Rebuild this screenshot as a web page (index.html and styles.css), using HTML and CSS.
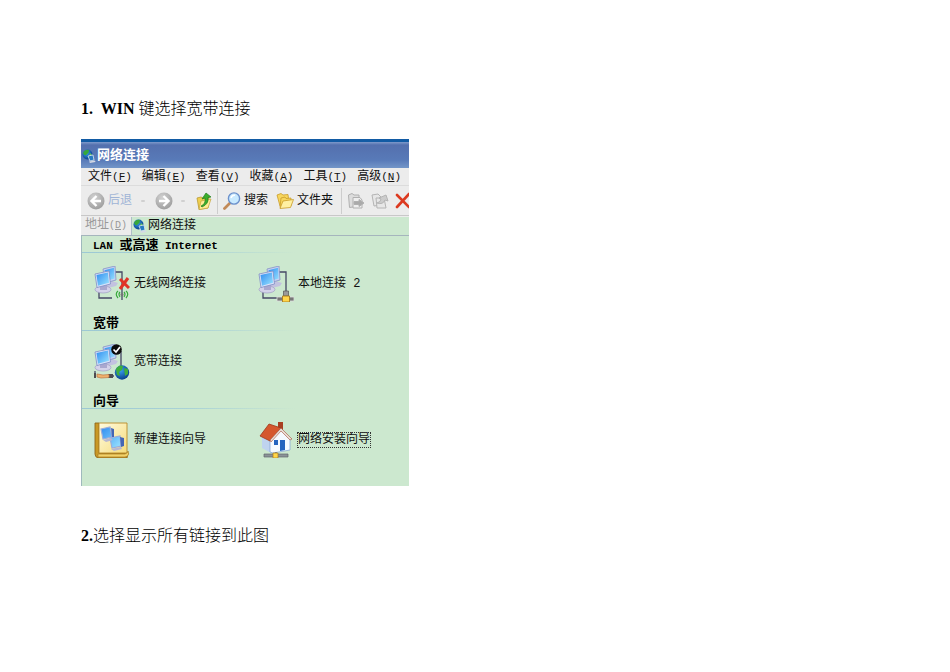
FILE: index.html
```html
<!DOCTYPE html>
<html lang="zh-CN">
<head>
    <meta charset="UTF-8">
    <meta name="viewport" content="width=device-width, initial-scale=1.0">
    <title>WIN 键选择宽带连接</title>
    <link rel="stylesheet" href="styles.css">
</head>
<body>
    <!-- shared drawings -->
    <svg class="defs" width="0" height="0" aria-hidden="true">
        <defs>
            <linearGradient id="screen" x1="0" y1="0" x2="1" y2="1">
                <stop offset="0" stop-color="#2f8df0"/>
                <stop offset="1" stop-color="#9be4ff"/>
            </linearGradient>
            <linearGradient id="paper" x1="0" y1="0" x2="1" y2="1">
                <stop offset="0" stop-color="#fffbe0"/>
                <stop offset="1" stop-color="#f5dc7c"/>
            </linearGradient>
            <radialGradient id="ball" cx="0.4" cy="0.35" r="0.7">
                <stop offset="0" stop-color="#3aa0ee"/>
                <stop offset="1" stop-color="#063a86"/>
            </radialGradient>
            <radialGradient id="disc" cx="0.4" cy="0.3" r="0.8">
                <stop offset="0" stop-color="#d2d2d2"/>
                <stop offset="1" stop-color="#989898"/>
            </radialGradient>
            <symbol id="pcs" viewBox="0 0 36 36">
                <path d="M11 17 L18 15 L24 17 L22 20 L14 22Z" fill="#c3c2e0"/>
                <path d="M9 3 L21 0 L22 14 L11 17Z" fill="#c9d3f2" stroke="#8592c6" stroke-width="0.8"/>
                <path d="M10.500 4.200 L20 1.800 L20.700 12.500 L12 15Z" fill="url(#screen)"/>
                <ellipse cx="9" cy="23.500" rx="8" ry="3.500" fill="#d4d2ea" stroke="#a09ec4" stroke-width="0.7"/>
                <path d="M6 18 L13 17 L13 24 L6 24Z" fill="#aaa8cf"/>
                <path d="M1 8 L15 5 L16.500 18 L3 21.500Z" fill="#dbe3fa" stroke="#7f8dc4" stroke-width="0.8"/>
                <path d="M2.500 9 L13.900 6.600 L15 16.800 L4 19.700Z" fill="url(#screen)"/>
            </symbol>
            <symbol id="net" viewBox="0 0 14 14">
                <circle cx="5.500" cy="5.500" r="5" fill="url(#ball)"/>
                <path d="M1 4 Q3 0 7 1 Q7 4 5 5 Q3 8 1 4Z" fill="#37a83a"/>
                <path d="M8 4 L10 6 L9 8 L7 7Z" fill="#68c65a"/>
                <path d="M6 7 L11 6 L12 11 L8 12Z" fill="#277ac2" stroke="#dce6ef" stroke-width="0.8"/>
                <path d="M7 12.500 L13 11.500 L13.500 13 L8 14Z" fill="#d4d8e4"/>
            </symbol>
        </defs>
    </svg>

    <main class="page">
        <p class="step"><b>1.&nbsp; WIN</b> 键选择宽带连接</p>

        <section class="window">
            <header class="titlebar">
                <svg class="icon-small" viewBox="0 0 14 14"><use href="#net"/></svg>
                <h1>网络连接</h1>
            </header>

            <nav class="menubar">
                <button type="button">文件<span>(<u>F</u>)</span></button>
                <button type="button">编辑<span>(<u>E</u>)</span></button>
                <button type="button">查看<span>(<u>V</u>)</span></button>
                <button type="button">收藏<span>(<u>A</u>)</span></button>
                <button type="button">工具<span>(<u>T</u>)</span></button>
                <button type="button">高级<span>(<u>N</u>)</span></button>
            </nav>

            <div class="toolbar">
                <button type="button" class="tool back" disabled>
                    <svg class="icon-tool" viewBox="0 0 18 18">
                        <circle cx="9" cy="9" r="8.500" fill="url(#disc)"/>
                        <path d="M9.500 4 L4.500 9 L9.500 14 M5 9 H14" fill="none" stroke="#fff" stroke-width="2.400"/>
                    </svg>
                    后退
                </button>
                <span class="drop"></span>
                <button type="button" class="tool forward" aria-label="前进" disabled>
                    <svg class="icon-tool" viewBox="0 0 18 18">
                        <circle cx="9" cy="9" r="8.500" fill="url(#disc)"/>
                        <path d="M8.500 4 L13.500 9 L8.500 14 M13 9 H4" fill="none" stroke="#fff" stroke-width="2.400"/>
                    </svg>
                </button>
                <span class="drop"></span>
                <button type="button" class="tool up" aria-label="向上">
                    <svg class="icon-tool" viewBox="0 0 18 18">
                        <path d="M2 6 L6 5 L8 6 L14 5 L13 16 L4 17.500Z" fill="#f0cf4e" stroke="#b99a35" stroke-width="0.8"/>
                        <path d="M4 17.500 L6 9 L16 7 L13 16Z" fill="#ffec94" stroke="#c5a53c" stroke-width="0.7"/>
                        <path d="M6 14 Q11 12 10 6 L7 7 L11 1 L16 5 L13 5.500 Q14 12 7 15Z" fill="#3cae2c" stroke="#1f7e1c" stroke-width="0.7"/>
                    </svg>
                </button>
                <span class="separator"></span>
                <button type="button" class="tool">
                    <svg class="icon-tool" viewBox="0 0 18 18">
                        <path d="M7 11 L1.500 16.500" stroke="#c28a58" stroke-width="2.800" stroke-linecap="round"/>
                        <circle cx="11" cy="6.500" r="5.600" fill="#c9eaff" stroke="#6c91cc" stroke-width="1.400"/>
                        <path d="M8 6 Q9 3 12 3.300" fill="none" stroke="#fff" stroke-width="1.500"/>
                    </svg>
                    搜索
                </button>
                <button type="button" class="tool folders">
                    <svg class="icon-tool" viewBox="0 0 18 18">
                        <path d="M1 3 L5 1.500 L7 3 L12 2.500 L13 11 L4 14Z" fill="#f7d65e" stroke="#c99c28" stroke-width="0.8"/>
                        <path d="M4 15.500 L5 6 L9 5 L10 6.500 L15 6 L15 14Z" fill="#f7d65e" stroke="#c99c28" stroke-width="0.8"/>
                        <path d="M4 16.500 L7 9 L17.500 7.500 L14.500 15.500Z" fill="#fff0a2" stroke="#c99c28" stroke-width="0.8"/>
                    </svg>
                    文件夹
                </button>
                <span class="separator"></span>
                <button type="button" class="tool" aria-label="移至" disabled>
                    <svg class="icon-tool" viewBox="0 0 18 18" fill="#ddd" stroke="#b0b0b0">
                        <path d="M1.500 3 L5 1.500 L7 3 L12 3 V14 L2.500 15.500Z"/>
                        <path d="M6 5.500 H13 L15 8 V16 H6Z" fill="#eee"/>
                        <path d="M7 9.500 H12 V7.500 L17 11 L12 14.500 V12.500 H7Z" fill="#aaa"/>
                    </svg>
                </button>
                <button type="button" class="tool copy" aria-label="复制到" disabled>
                    <svg class="icon-tool" viewBox="0 0 18 18" fill="#e7e7e7" stroke="#b4b4b4">
                        <path d="M1 3 L7 2 L10 5 V13 L3 14Z"/>
                        <path d="M5 6 H13 L15 16 H6Z"/>
                        <path d="M6 11 Q10 10 10 7 L8 6 L15 3 L17 9 L14 8 Q12 13 6 11Z" fill="#ccc"/>
                    </svg>
                </button>
                <button type="button" class="tool delete" aria-label="删除">
                    <svg class="icon-tool" viewBox="0 0 18 18">
                        <path d="M2 3 L14 15 M14 2 L2 15" stroke="#dc3a20" stroke-width="2.600" stroke-linecap="round"/>
                    </svg>
                </button>
            </div>

            <div class="address">
                <label for="address">地址<span>(<u>D</u>)</span></label>
                <div class="address-box">
                    <svg class="icon-small" viewBox="0 0 14 14"><use href="#net"/></svg>
                    <input type="text" id="address" value="网络连接">
                </div>
            </div>

            <div class="content">
                <section class="group">
                    <h2><span>LAN </span>或高速<span> Internet</span></h2>
                    <div class="items">
                        <a class="item" href="#">
                            <svg class="icon-item" viewBox="0 0 36 36">
                                <path d="M21 6 H28 V34 M5 25 V32 H18" fill="none" stroke="#454766" stroke-width="1.300"/>
                                <use href="#pcs"/>
                                <path d="M26 13 L35 22 M34 12 L26 23" stroke="#e03428" stroke-width="3"/>
                                <g fill="none" stroke="#36a939" stroke-width="1.200">
                                    <path d="M24 25 Q20.500 28 24 32 M26 26 Q24 28 26 31 M30 26 Q32 28 30 31 M32 25 Q35.500 28 32 32"/>
                                    <circle cx="28" cy="28.500" r="1" stroke="#777"/>
                                </g>
                            </svg>
                            无线网络连接
                        </a>
                        <a class="item" href="#">
                            <svg class="icon-item" viewBox="0 0 36 36">
                                <path d="M21 6 H28 V30 M5 25 V32 H20" fill="none" stroke="#454766" stroke-width="1.300"/>
                                <use href="#pcs"/>
                                <path d="M19 31 H36 V35 H19Z" fill="#777" stroke="#ddd" stroke-width="0.800"/>
                                <path d="M25.500 25 H30.500 V30 H25.500Z" fill="#9a9a9a" stroke="#555" stroke-width="0.700"/>
                                <path d="M24.500 30 H31.500 V36 H24.500Z" fill="#ffd64a" stroke="#a77a1f" stroke-width="0.900"/>
                            </svg>
                            本地连接&nbsp;2
                        </a>
                    </div>
                </section>

                <section class="group">
                    <h2>宽带</h2>
                    <div class="items">
                        <a class="item" href="#">
                            <svg class="icon-item" viewBox="0 0 36 36">
                                <path d="M27 7 V22 M1 27 V33 M3 32 H20" fill="none" stroke="#454766" stroke-width="1.300"/>
                                <use href="#pcs"/>
                                <circle cx="22.500" cy="5.500" r="5.300" fill="#0b0b0b"/>
                                <path d="M19.500 5.500 L22 8 L26 3" fill="none" stroke="#fff" stroke-width="1.700"/>
                                <circle cx="28" cy="28.500" r="7.200" fill="url(#ball)"/>
                                <path d="M22 25 Q25 20 29 22 L28 26 L25 28 L26 32 L23 31Z M30 24 L34 25 L34 30 L31 32Z" fill="#3fae3c"/>
                                <path d="M0 29 H2 V34 H0Z M14 30 H19 V34 H14Z" fill="#4c4c50"/>
                                <path d="M3 30 L9 31 L15 30.500 V33.500 L7 34 L3 33Z" fill="#efb06c" stroke="#bd7442" stroke-width="0.700"/>
                            </svg>
                            宽带连接
                        </a>
                    </div>
                </section>

                <section class="group">
                    <h2>向导</h2>
                    <div class="items">
                        <a class="item" href="#">
                            <svg class="icon-item" viewBox="0 0 36 36">
                                <path d="M1 1 H5 V31 H34 L33 36 H4 Q1 35 1 32Z" fill="#c99826" stroke="#8e671c" stroke-width="0.900"/>
                                <path d="M5 1 H33 V31 H5Z" fill="url(#paper)" stroke="#b98a28" stroke-width="0.900"/>
                                <path d="M4 32 H31 Q34 31 34 29 Q36 34 31 35 H4Z" fill="#f3d269" stroke="#a77c22" stroke-width="0.700"/>
                                <path d="M7 7 L16 5 L18 15 L9 17Z M16 16 L26 14 L27 24 L18 26Z" fill="url(#screen)" stroke="#9aacdc" stroke-width="1.200"/>
                                <path d="M17 6 L20 7 L20 15 L18 15Z M26 15 L30 16 V24 L27 25Z" fill="#4566b4"/>
                                <path d="M9 18 L17 16 L19 18 L12 20Z M17 27 L27 25 L28 27 L20 29Z" fill="#b6b7d2"/>
                            </svg>
                            新建连接向导
                        </a>
                        <a class="item" href="#">
                            <svg class="icon-item" viewBox="0 0 36 36">
                                <path d="M20 0 H25 V10 H20Z" fill="#a83f22"/>
                                <path d="M4 15 L13 20 L13 31 L4 26Z" fill="#bfd3ef"/>
                                <path d="M12 18 L23 7 L32 17 V28 L15 31 L12 30Z" fill="#f5faff" stroke="#8aa9d5" stroke-width="0.800"/>
                                <path d="M2 14 L11 2 L23 6 L12 19Z" fill="#d5572d" stroke="#9d371b" stroke-width="0.800"/>
                                <path d="M23 6 L34 17 L32 18 L23 9 L13 20 L12 18Z" fill="#e8ddd6" stroke="#a85038" stroke-width="0.600"/>
                                <path d="M16 18 H20 V23 H16Z M22 18 H27 V28 L22 29Z" fill="#2464bf"/>
                                <path d="M18 30 V33" stroke="#777" stroke-width="1.500"/>
                                <path d="M6 32 H30 V35 H6Z" fill="#8b9398" stroke="#5e666c" stroke-width="0.700"/>
                                <path d="M15 31 H20 V36 H15Z" fill="#ffd64a" stroke="#a77a1f" stroke-width="0.700"/>
                            </svg>
                            <span class="focused">网络安装向导</span>
                        </a>
                    </div>
                </section>
            </div>
        </section>

        <p class="step"><b>2.</b>选择显示所有链接到此图</p>
    </main>
</body>
</html>
```

FILE: styles.css
```css
body {
    margin: 0;
    background-color: #fff;
    color: #000;
}

.defs {
    display: block;
}

.page {
    padding: 99px 81px;
}

.step {
    margin: 0;
    font-family: "Liberation Serif", "Noto Sans CJK SC", serif;
    font-size: 16px;
    font-weight: 300;
    line-height: 20px;
}

.step b {
    font-weight: bold;
}

.window {
    max-width: 328px;
    margin: 20px 0 40px;
    overflow: hidden;
    background-color: #ececec;
    font-family: "Liberation Mono", "Noto Sans CJK SC", monospace;
    font-size: 12px;
    line-height: 18px;
}

.window button,
.window input {
    padding: 0;
    border: none;
    background: none;
    color: #111;
    font: inherit;
}

.window svg {
    display: block;
    flex: none;
}

.icon-small {
    width: 14px;
    height: 14px;
}

.icon-tool {
    width: 18px;
    height: 18px;
}

.icon-item {
    width: 36px;
    height: 36px;
}

.titlebar {
    display: flex;
    align-items: center;
    gap: 1px;
    height: 24px;
    padding: 2px 1px 0;
    border-top: 3px solid #125ba4;
    background: linear-gradient(#7e9acb 0, #5470ae 3px, #587ab8 18px, #7396c8 100%);
}

.titlebar h1 {
    margin: 0;
    color: #fff;
    font-size: 13px;
    font-weight: bold;
}

.menubar {
    display: flex;
    gap: 10px;
    height: 17px;
    padding-left: 7px;
    border-bottom: 1px solid #dcdcdc;
}

.menubar button {
    flex: none;
    margin: 0;
    line-height: 18px;
}

.menubar span {
    font-size: 11px;
}

.toolbar {
    display: flex;
    align-items: center;
    height: 29px;
    padding-left: 6px;
    overflow: hidden;
    border-bottom: 1px solid #c8c8c8;
}

.tool {
    display: flex;
    flex: none;
    align-items: center;
    gap: 3px;
    margin: 0;
}

.window .back {
    color: #9fb4d6;
}

.drop {
    flex: none;
    width: 4px;
    height: 2px;
    margin: 0 10px 0 9px;
    border-radius: 1px;
    background-color: #d0d0d0;
}

.forward + .drop {
    margin-left: 8px;
}

.separator {
    flex: none;
    width: 1px;
    height: 26px;
    margin: 0 5px 0 4px;
    background-color: #cdcdcd;
}

.folders {
    margin-left: 8px;
}

.folders + .separator {
    margin-left: 8px;
}

.copy,
.delete {
    margin-left: 6px;
}

.address {
    display: flex;
    align-items: center;
    height: 19px;
    border-bottom: 1px solid #a5b5bd;
}

.address label {
    flex: none;
    width: 46px;
    padding-left: 4px;
    color: #999;
}

.address label span {
    font-size: 10px;
}

.address-box {
    display: flex;
    flex: 1;
    align-items: center;
    gap: 1px;
    min-width: 0;
    height: 18px;
    padding-left: 1px;
    border-left: 1px solid #aebfc8;
    background-color: #cce8cf;
}

.address-box input {
    flex: 1;
    min-width: 0;
    margin: 0;
}

.content {
    padding: 0 0 16px;
    border-left: 1px solid #9fb9bd;
    background-color: #cce8cf;
}

.group h2 {
    box-sizing: border-box;
    height: 17px;
    margin: 0;
    padding-left: 11px;
    background: linear-gradient(to right, #9cc8d4, #a9d2d6 50%, #cce8cf) no-repeat left bottom / 214px 1px;
    font-size: 13px;
    font-weight: bold;
    line-height: 20px;
}

.group h2 span {
    font-size: 11px;
    white-space: pre;
}

.items {
    display: grid;
    grid-template-columns: repeat(2, 1fr);
    gap: 13px;
    padding: 13px 0 12px 12px;
}

.item {
    display: flex;
    align-items: center;
    gap: 4px;
    color: #111;
    text-decoration: none;
    white-space: nowrap;
}

.focused {
    outline: 1px dotted #333;
    line-height: 14px;
}
```
